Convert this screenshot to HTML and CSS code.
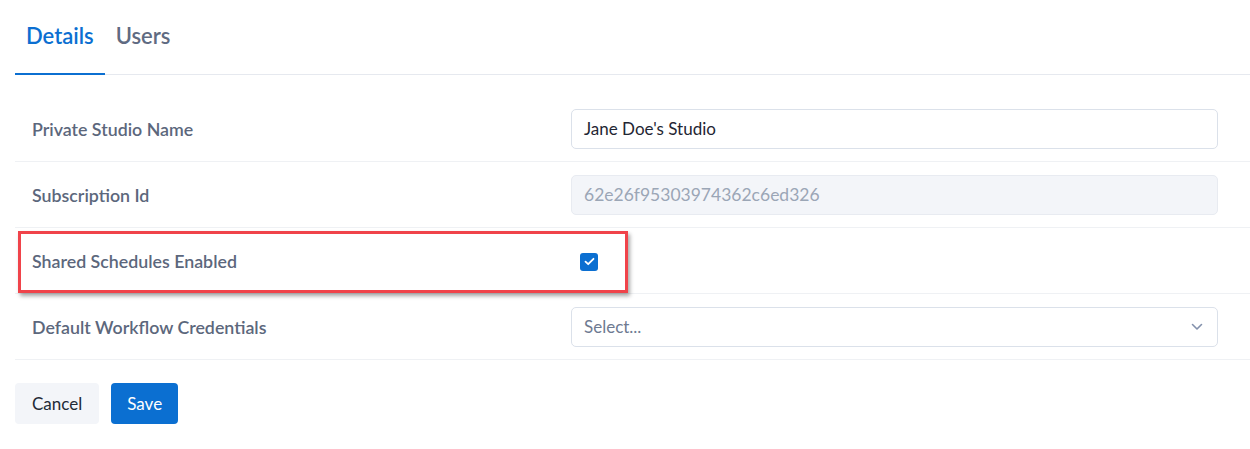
FILE: index.html
```html
<!DOCTYPE html>
<html>
<head>
<meta charset="utf-8">
<link rel="stylesheet" href="styles.css">
</head>
<body>
<div class="page">
  <div class="tabs">
    <div class="tab active">Details</div>
    <div class="tab">Users</div>
  </div>
  <div class="form">
    <div class="row">
      <div class="label">Private Studio Name</div>
      <div class="field"><div class="input">Jane Doe's Studio</div></div>
    </div>
    <div class="row">
      <div class="label">Subscription Id</div>
      <div class="field"><div class="input disabled">62e26f95303974362c6ed326</div></div>
    </div>
    <div class="row highlight-row">
      <div class="label">Shared Schedules Enabled</div>
      <div class="field">
        <span class="checkbox">
          <svg width="11" height="9" viewBox="0 0 11 9"><path d="M1.5 4.6 L4.2 7.2 L9.5 1.8" fill="none" stroke="#fff" stroke-width="1.8" stroke-linecap="round" stroke-linejoin="round"/></svg>
        </span>
      </div>
      <div class="annot"></div>
    </div>
    <div class="row">
      <div class="label">Default Workflow Credentials</div>
      <div class="field">
        <div class="input select"><span class="ph">Select...</span>
          <svg width="12" height="8" viewBox="0 0 12 8"><path d="M1.5 1.5 L6 6 L10.5 1.5" fill="none" stroke="#8391ac" stroke-width="1.6" stroke-linecap="round" stroke-linejoin="round"/></svg>
        </div>
      </div>
    </div>
  </div>
  <div class="actions">
    <button class="btn cancel">Cancel</button>
    <button class="btn save">Save</button>
  </div>
</div>
</body>
</html>
```
FILE: styles.css
```css
* { box-sizing: border-box; }
html, body { margin: 0; padding: 0; background: #fff; overflow: hidden; }
body { font-family: Lato, "Open Sans", sans-serif; }
.page { padding: 0 0 0 15px; width: 1250px; }
.tabs { display: flex; border-bottom: 1px solid #e6e9ef; }
.tab {
  padding: 22px 11px 23px 11px;
  font-size: 22px;
  font-weight: 600;
  color: #5f6b82;
  line-height: 28px;
  margin-bottom: -1px;
  border-bottom: 2px solid transparent;
}
.tab.active { color: #0b6fd1; border-bottom-color: #0b6fd1; }
.form { margin-top: 21px; }
.row {
  position: relative;
  display: grid;
  grid-template-columns: 539px 647px;
  align-items: center;
  height: 66px;
  padding-left: 17px;
  border-bottom: 1px solid #eff1f4;
}
.label { font-size: 17.8px; font-weight: 600; color: #5c677c; }
.input {
  height: 40px;
  border: 1px solid #dbe1ea;
  border-radius: 5px;
  padding: 0 12px;
  display: flex;
  align-items: center;
  font-size: 17px;
  color: #1f2633;
}
.input.disabled { background: #f3f5f9; border-color: #e8ebf1; color: #9ba6b6; font-size: 17.5px; }
.select { justify-content: space-between; padding-right: 14px; }
.ph { color: #6e7a91; }
.checkbox {
  display: inline-flex;
  align-items: center;
  justify-content: center;
  width: 18px;
  height: 18px;
  margin-left: 9px;
  background: #0b6fd1;
  border-radius: 3px;
}
.annot {
  position: absolute;
  left: 3px;
  top: 3px;
  width: 610px;
  height: 62px;
  border: 3px solid #f0434a;
  box-shadow: 2px 3px 4px rgba(0,0,0,0.35);
  pointer-events: none;
}
.actions { display: flex; gap: 12px; margin-top: 23px; }
.btn {
  font-family: Lato, "Open Sans", sans-serif;
  font-size: 17px;
  height: 41px;
  border: none;
  border-radius: 4px;
  padding: 0 17px;
}
.cancel { background: #f3f5f9; color: #222a36; }
.save { background: #0b6fd1; color: #fff; padding: 0 16px; }
```
